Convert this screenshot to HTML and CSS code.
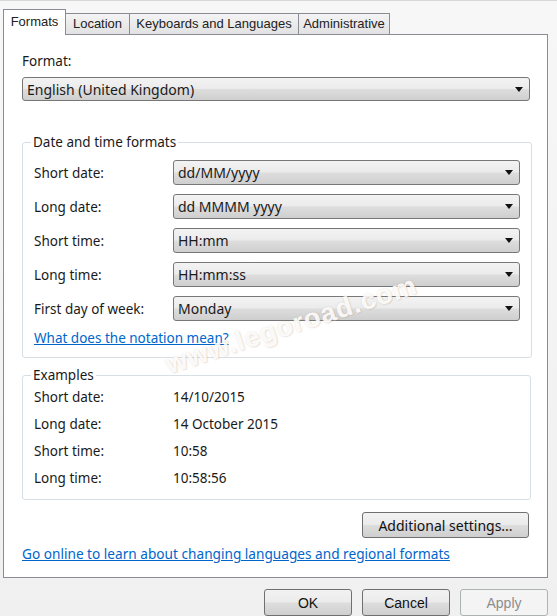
FILE: index.html
```html
<!DOCTYPE html>
<html>
<head>
<meta charset="utf-8">
<link rel="stylesheet" href="styles.css">
</head>
<body>
<div class="window">
  <div class="tabs">
    <div class="tab active">Formats</div>
    <div class="tab">Location</div>
    <div class="tab">Keyboards and Languages</div>
    <div class="tab">Administrative</div>
  </div>
  <div class="panel">
    <div class="label-format">Format:</div>
    <div class="combo combo-wide"><span>English (United Kingdom)</span><i class="arrow"></i></div>

    <fieldset class="group group-dt">
      <legend>Date and time formats</legend>
      <div class="row"><span class="rlabel">Short date:</span><div class="combo"><span>dd/MM/yyyy</span><i class="arrow"></i></div></div>
      <div class="row"><span class="rlabel">Long date:</span><div class="combo"><span>dd MMMM yyyy</span><i class="arrow"></i></div></div>
      <div class="row"><span class="rlabel">Short time:</span><div class="combo"><span>HH:mm</span><i class="arrow"></i></div></div>
      <div class="row"><span class="rlabel">Long time:</span><div class="combo"><span>HH:mm:ss</span><i class="arrow"></i></div></div>
      <div class="row"><span class="rlabel">First day of week:</span><div class="combo"><span>Monday</span><i class="arrow"></i></div></div>
      <a class="link notation">What does the notation mean?</a>
    </fieldset>

    <fieldset class="group group-ex">
      <legend>Examples</legend>
      <div class="erow"><span class="rlabel">Short date:</span><span>14/10/2015</span></div>
      <div class="erow"><span class="rlabel">Long date:</span><span>14 October 2015</span></div>
      <div class="erow"><span class="rlabel">Short time:</span><span>10:58</span></div>
      <div class="erow"><span class="rlabel">Long time:</span><span>10:58:56</span></div>
    </fieldset>

    <div class="addl-wrap"><div class="btn addl">Additional settings...</div></div>
    <a class="link online">Go online to learn about changing languages and regional formats</a>

    <div class="watermark">www.legoroad.com</div>
  </div>
  <div class="buttons">
    <div class="btn dlg">OK</div>
    <div class="btn dlg">Cancel</div>
    <div class="btn dlg disabled">Apply</div>
  </div>
</div>
</body>
</html>
```
FILE: styles.css
```css
html, body {
  margin: 0;
  padding: 0;
  background: #f0f0f0;
}
.window {
  width: 557px;
  height: 616px;
  overflow: hidden;
  font-family: "Noto Sans", "Open Sans", sans-serif;
  font-size: 13.5px;
  color: #1a1a1a;
  background: linear-gradient(#f7f7f7, #f0f0f0);
  border-top: 1px solid #d8d8d8;
  box-sizing: border-box;
  padding-top: 2px;
}
.tabs {
  display: flex;
  align-items: flex-end;
  height: 31px;
  padding-left: 3px;
  font-family: "Liberation Sans", Arial, sans-serif;
  font-size: 13px;
}
.tab {
  box-sizing: border-box;
  height: 21px;
  line-height: 20px;
  text-align: center;
  border: 1px solid #898c95;
  border-bottom: none;
  border-left: none;
  background: linear-gradient(#f4f4f4, #e2e2e2);
  color: #222;
}
.tab:nth-child(2) { width: 64px; }
.tab:nth-child(3) { width: 169px; }
.tab:nth-child(4) { width: 91px; }
.tab.active {
  width: 63px;
  height: 26px;
  line-height: 23px;
  background: #fff;
  border-left: 1px solid #898c95;
  margin-bottom: -1px;
  z-index: 2;
}
.panel {
  position: relative;
  margin-left: 3px;
  width: 545px;
  height: 544px;
  box-sizing: border-box;
  background: #fff;
  border: 1px solid #898c95;
  padding: 17px 18px 0 18px;
}
.label-format {
  height: 18px;
  line-height: 18px;
  margin-bottom: 7px;
}
.combo {
  position: relative;
  box-sizing: border-box;
  height: 24px;
  border: 1px solid #777;
  border-radius: 3px;
  background: linear-gradient(#f3f3f3 0%, #ebebeb 48%, #dddddd 52%, #cfcfcf 100%);
  display: flex;
  align-items: center;
  padding-left: 4px;
  font-size: 14px;
}
.combo-wide {
  width: 508px;
}
.arrow {
  position: absolute;
  right: 6px;
  top: 9px;
  width: 0;
  height: 0;
  border-left: 4px solid transparent;
  border-right: 4px solid transparent;
  border-top: 5px solid #111;
}
.group {
  margin: 0;
  padding: 0 11px;
  border: 1px solid #d5dfe5;
  border-radius: 3px;
  width: 509px;
  box-sizing: border-box;
}
.group legend {
  padding: 0 2px;
  margin-left: -3px;
  line-height: 18px;
}
.group-dt {
  margin-top: 32px;
  height: 225px;
  padding-top: 9px;
}
.row {
  display: flex;
  align-items: center;
  height: 25px;
  margin-bottom: 9px;
}
.row .combo {
  width: 347px;
  height: 25px;
}
.rlabel {
  width: 139px;
  flex: none;
}
.link {
  color: #0066cc;
  text-decoration: underline;
  display: block;
  line-height: 18px;
}
.notation {
  margin-top: -1px;
}
.group-ex {
  margin-top: 8px;
  height: 134px;
  padding-top: 0;
}
.erow {
  display: flex;
  height: 27px;
  line-height: 27px;
}
.addl-wrap {
  display: flex;
  justify-content: flex-end;
  width: 507px;
  margin-top: 12px;
}
.btn {
  box-sizing: border-box;
  border: 1px solid #707070;
  border-radius: 3px;
  background: linear-gradient(#f2f2f2 0%, #ebebeb 48%, #dddddd 52%, #cfcfcf 100%);
  display: flex;
  align-items: center;
  justify-content: center;
  color: #111;
}
.addl {
  width: 167px;
  height: 26px;
  font-size: 14px;
}
.online {
  margin-top: 7px;
  font-size: 13.65px;
}
.buttons {
  display: flex;
  justify-content: flex-end;
  gap: 10px;
  padding-right: 9px;
  margin-top: 11px;
  font-family: "Liberation Sans", Arial, sans-serif;
  font-size: 14px;
}
.dlg {
  width: 88px;
  height: 27px;
}
.dlg.disabled {
  color: #8d8d8d;
  border-color: #adb2b5;
  background: #f4f4f4;
}
.watermark {
  position: absolute;
  left: 158px;
  top: 316px;
  transform: rotate(-18deg);
  transform-origin: left top;
  font-family: "Liberation Sans", Arial, sans-serif;
  font-weight: bold;
  font-size: 27px;
  letter-spacing: 1px;
  color: rgba(255, 255, 255, 0.9);
  text-shadow: 0 0 2px rgba(170, 140, 110, 0.25), 1px 1px 1px rgba(170, 140, 110, 0.18);
  pointer-events: none;
}
```
